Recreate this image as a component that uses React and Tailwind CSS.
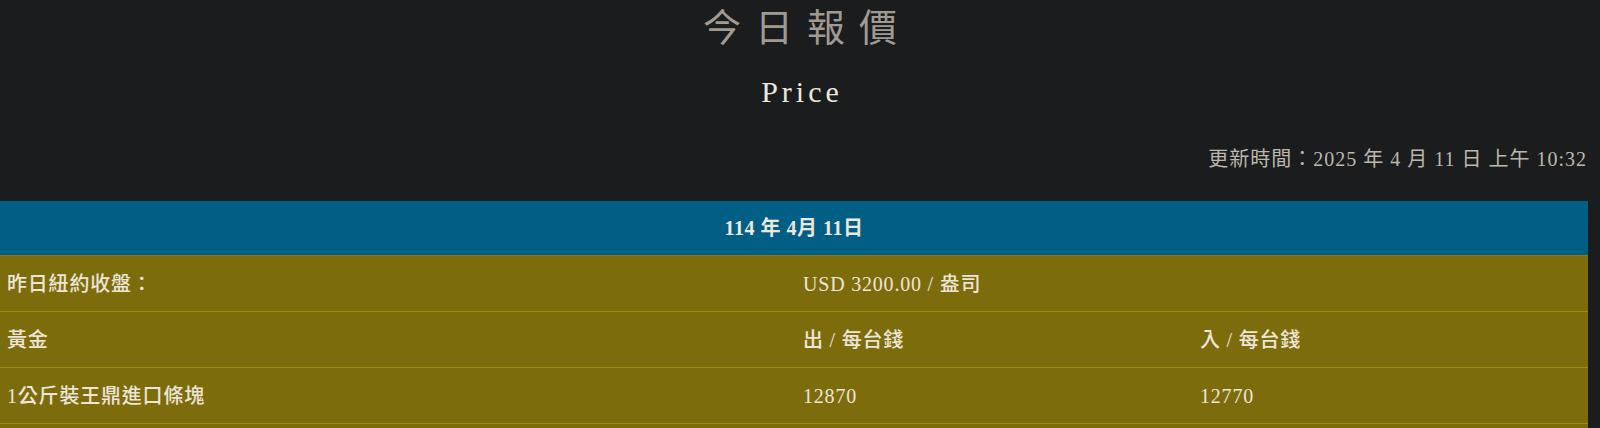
export default function App() {
  const serif = "font-['Liberation_Serif','Noto_Sans_CJK_TC',serif]";
  const rows = [
    ["昨日紐約收盤：", "USD 3200.00 / 盎司", ""],
    ["黃金", "出 / 每台錢", "入 / 每台錢"],
    ["1公斤裝王鼎進口條塊", "12870", "12770"],
    ["", "", ""],
  ];
  return (
    <div className={`min-h-screen bg-[#1b1c1e] ${serif}`}>
      <h1 className="h-[50px] pl-[14px] text-center text-[38px] font-normal leading-[50px] tracking-[14px] text-[#a09b92] font-['Noto_Sans_CJK_TC',sans-serif]">
        今日報價
      </h1>
      <div className="mt-[22px] h-[40px] pl-[4px] text-center text-[30px] leading-[40px] tracking-[4px] text-[#ece8df]">
        Price
      </div>
      <div className="mt-[33px] h-[28px] pr-[13px] text-right text-[20px] leading-[28px] tracking-[1px] text-[#bdb7ad]">
        更新時間：2025 年 4 月 11 日 上午 10:32
      </div>
      <div className="mt-[28px] w-[1588px] overflow-hidden">
        <div className="flex h-[54px] items-center justify-center bg-[#015e84] text-[20px] font-bold tracking-[0.5px] text-[#ece8dc]">
          114 年 4月 11日
        </div>
        {rows.map((r, i) => (
          <div
            key={i}
            className={`grid grid-cols-[794px_397px_397px] items-center border-b border-[#a08e0c] bg-[#7d6c0b] text-[20px] font-medium tracking-[0.8px] text-[#ebe6d8] ${i === 0 ? "h-[57px] border-t border-t-[#8a7a12]" : "h-[56px]"}`}
          >
            <div className="pl-[7px]">{r[0]}</div>
            <div className="pl-[9px]">{r[1]}</div>
            <div className="pl-[9px]">{r[2]}</div>
          </div>
        ))}
      </div>
    </div>
  );
}
